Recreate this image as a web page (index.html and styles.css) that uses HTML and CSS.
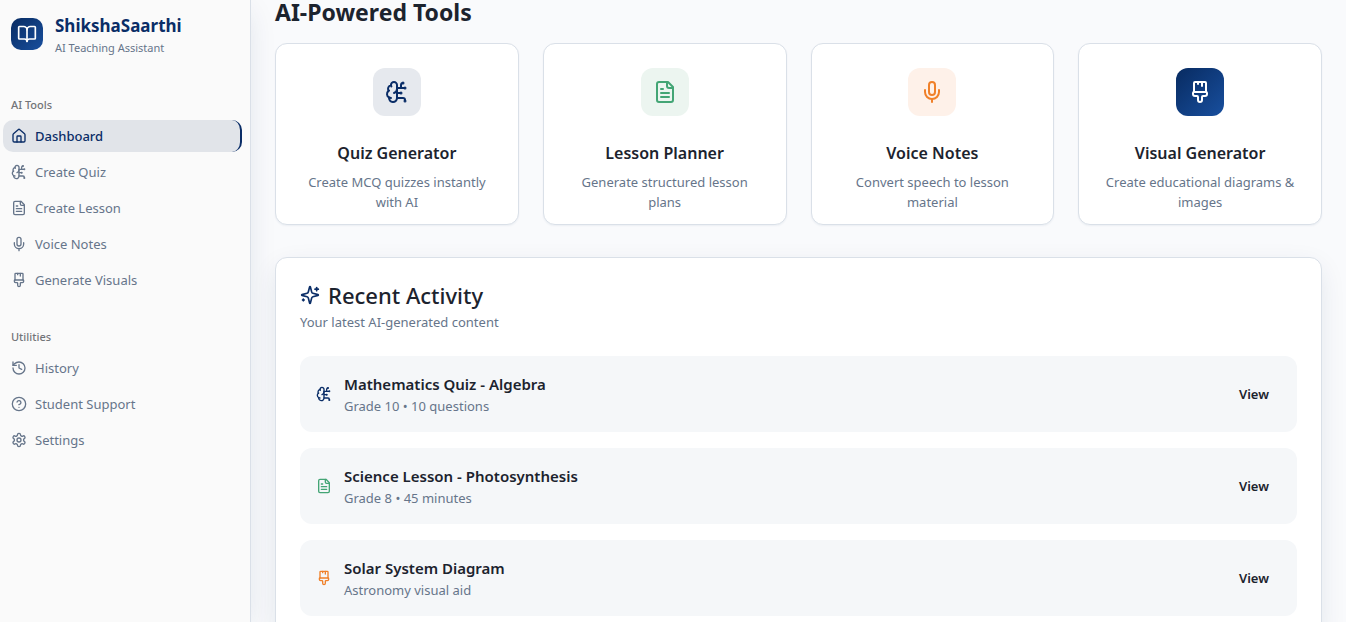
FILE: index.html
```html
<!DOCTYPE html>
<html lang="en">
<head>
<meta charset="utf-8">
<meta name="viewport" content="width=device-width, initial-scale=1">
<title>ShikshaSaarthi – AI Teaching Assistant</title>
<link rel="stylesheet" href="styles.css">
</head>
<body>
<svg class="sprite" aria-hidden="true">
  <symbol id="i-brain" viewBox="0 0 24 24"><path d="M12 5a3 3 0 1 0-5.997.125 4 4 0 0 0-2.526 5.77 4 4 0 0 0 .556 6.588A4 4 0 1 0 12 18Z"/><path d="M9 13a4.5 4.5 0 0 0 3-4"/><path d="M6.003 5.125A3 3 0 0 0 6.401 6.5"/><path d="M3.477 10.896a4 4 0 0 1 .585-.396"/><path d="M6 18a4 4 0 0 1-1.967-.516"/><path d="M12 13h4"/><path d="M12 18h6a2 2 0 0 1 2 2v1"/><path d="M12 8h8"/><path d="M16 8V5a2 2 0 0 1 2-2"/><circle cx="16" cy="13" r=".5"/><circle cx="18" cy="3" r=".5"/><circle cx="20" cy="21" r=".5"/><circle cx="20" cy="8" r=".5"/></symbol>
  <symbol id="i-house" viewBox="0 0 24 24"><path d="M15 21v-8a1 1 0 0 0-1-1h-4a1 1 0 0 0-1 1v8"/><path d="M3 10a2 2 0 0 1 .709-1.528l7-5.999a2 2 0 0 1 2.582 0l7 5.999A2 2 0 0 1 21 10v9a2 2 0 0 1-2 2H5a2 2 0 0 1-2-2z"/></symbol>
  <symbol id="i-file" viewBox="0 0 24 24"><path d="M15 2H6a2 2 0 0 0-2 2v16a2 2 0 0 0 2 2h12a2 2 0 0 0 2-2V7Z"/><path d="M14 2v4a2 2 0 0 0 2 2h4"/><path d="M10 9H8"/><path d="M16 13H8"/><path d="M16 17H8"/></symbol>
  <symbol id="i-mic" viewBox="0 0 24 24"><path d="M12 2a3 3 0 0 0-3 3v7a3 3 0 0 0 6 0V5a3 3 0 0 0-3-3Z"/><path d="M19 10v2a7 7 0 0 1-14 0v-2"/><path d="M12 19v3"/></symbol>
  <symbol id="i-brush" viewBox="0 0 24 24"><path d="M10 2v2"/><path d="M14 2v4"/><path d="M17 2a1 1 0 0 1 1 1v9H6V3a1 1 0 0 1 1-1z"/><path d="M6 12a1 1 0 0 0-1 1v1a2 2 0 0 0 2 2h2a1 1 0 0 1 1 1v2.9a2 2 0 1 0 4 0V17a1 1 0 0 1 1-1h2a2 2 0 0 0 2-2v-1a1 1 0 0 0-1-1"/></symbol>
  <symbol id="i-history" viewBox="0 0 24 24"><path d="M3 12a9 9 0 1 0 9-9 9.75 9.75 0 0 0-6.74 2.74L3 8"/><path d="M3 3v5h5"/><path d="M12 7v5l4 2"/></symbol>
  <symbol id="i-help" viewBox="0 0 24 24"><circle cx="12" cy="12" r="10"/><path d="M9.09 9a3 3 0 0 1 5.83 1c0 2-3 3-3 3"/><path d="M12 17h.01"/></symbol>
  <symbol id="i-gear" viewBox="0 0 24 24"><path d="M12.22 2h-.44a2 2 0 0 0-2 2v.18a2 2 0 0 1-1 1.73l-.43.25a2 2 0 0 1-2 0l-.15-.08a2 2 0 0 0-2.73.73l-.22.38a2 2 0 0 0 .73 2.73l.15.1a2 2 0 0 1 1 1.72v.51a2 2 0 0 1-1 1.74l-.15.09a2 2 0 0 0-.73 2.73l.22.38a2 2 0 0 0 2.73.73l.15-.08a2 2 0 0 1 2 0l.43.25a2 2 0 0 1 1 1.73V20a2 2 0 0 0 2 2h.44a2 2 0 0 0 2-2v-.18a2 2 0 0 1 1-1.73l.43-.25a2 2 0 0 1 2 0l.15.08a2 2 0 0 0 2.73-.73l.22-.39a2 2 0 0 0-.73-2.73l-.15-.08a2 2 0 0 1-1-1.74v-.5a2 2 0 0 1 1-1.74l.15-.09a2 2 0 0 0 .73-2.73l-.22-.38a2 2 0 0 0-2.73-.73l-.15.08a2 2 0 0 1-2 0l-.43-.25a2 2 0 0 1-1-1.73V4a2 2 0 0 0-2-2z"/><circle cx="12" cy="12" r="3"/></symbol>
  <symbol id="i-sparkles" viewBox="0 0 24 24"><path d="M9.937 15.5A2 2 0 0 0 8.5 14.063l-6.135-1.582a.5.5 0 0 1 0-.962L8.5 9.936A2 2 0 0 0 9.937 8.5l1.582-6.135a.5.5 0 0 1 .963 0L14.063 8.5A2 2 0 0 0 15.5 9.937l6.135 1.581a.5.5 0 0 1 0 .964L15.5 14.063a2 2 0 0 0-1.437 1.437l-1.582 6.135a.5.5 0 0 1-.963 0z"/><path d="M20 3v4"/><path d="M22 5h-4"/><path d="M4 17v2"/><path d="M5 18H3"/></symbol>
  <symbol id="i-book" viewBox="0 0 24 24"><path d="M12 7v14"/><path d="M3 18a1 1 0 0 1-1-1V4a1 1 0 0 1 1-1h5a4 4 0 0 1 4 4 4 4 0 0 1 4-4h5a1 1 0 0 1 1 1v13a1 1 0 0 1-1 1h-6a3 3 0 0 0-3 3 3 3 0 0 0-3-3z"/></symbol>
</svg>
<div class="app">
  <aside class="sidebar">
    <div class="brand">
      <span class="brand-logo"><svg class="icon icon-md"><use href="#i-book"/></svg></span>
      <div>
        <div class="brand-name">ShikshaSaarthi</div>
        <div class="brand-sub">AI Teaching Assistant</div>
      </div>
    </div>
    <nav class="group" aria-labelledby="g-tools">
      <div class="group-label" id="g-tools">AI Tools</div>
      <a class="nav-link active" href="#dashboard" aria-current="page"><svg class="icon"><use href="#i-house"/></svg>Dashboard</a>
      <a class="nav-link" href="#quiz"><svg class="icon"><use href="#i-brain"/></svg>Create Quiz</a>
      <a class="nav-link" href="#lesson"><svg class="icon"><use href="#i-file"/></svg>Create Lesson</a>
      <a class="nav-link" href="#voice"><svg class="icon"><use href="#i-mic"/></svg>Voice Notes</a>
      <a class="nav-link" href="#visuals"><svg class="icon"><use href="#i-brush"/></svg>Generate Visuals</a>
    </nav>
    <nav class="group" aria-labelledby="g-utilities">
      <div class="group-label" id="g-utilities">Utilities</div>
      <a class="nav-link" href="#history"><svg class="icon"><use href="#i-history"/></svg>History</a>
      <a class="nav-link" href="#support"><svg class="icon"><use href="#i-help"/></svg>Student Support</a>
      <a class="nav-link" href="#settings"><svg class="icon"><use href="#i-gear"/></svg>Settings</a>
    </nav>
  </aside>
  <main class="main">
    <h2 class="section-title">AI-Powered Tools</h2>
    <div class="tools">
      <a class="tool" href="#quiz">
        <span class="tile tile-navy"><svg class="icon icon-lg"><use href="#i-brain"/></svg></span>
        <h3 class="tool-title">Quiz Generator</h3>
        <p class="tool-text">Create MCQ quizzes instantly with AI</p>
      </a>
      <a class="tool" href="#lesson">
        <span class="tile tile-green"><svg class="icon icon-lg"><use href="#i-file"/></svg></span>
        <h3 class="tool-title">Lesson Planner</h3>
        <p class="tool-text">Generate structured lesson plans</p>
      </a>
      <a class="tool" href="#voice">
        <span class="tile tile-orange"><svg class="icon icon-lg"><use href="#i-mic"/></svg></span>
        <h3 class="tool-title">Voice Notes</h3>
        <p class="tool-text">Convert speech to lesson material</p>
      </a>
      <a class="tool" href="#visuals">
        <span class="tile tile-solid"><svg class="icon icon-lg"><use href="#i-brush"/></svg></span>
        <h3 class="tool-title">Visual Generator</h3>
        <p class="tool-text">Create educational diagrams &amp; images</p>
      </a>
    </div>
    <section class="recent">
      <h3 class="recent-title"><svg class="icon icon-md navy"><use href="#i-sparkles"/></svg>Recent Activity</h3>
      <p class="recent-sub">Your latest AI-generated content</p>
      <ul class="rows">
        <li class="row">
          <svg class="icon navy"><use href="#i-brain"/></svg>
          <div class="row-body"><div class="row-title">Mathematics Quiz - Algebra</div><div class="row-text">Grade 10 • 10 questions</div></div>
          <button class="view" type="button">View</button>
        </li>
        <li class="row">
          <svg class="icon green"><use href="#i-file"/></svg>
          <div class="row-body"><div class="row-title">Science Lesson - Photosynthesis</div><div class="row-text">Grade 8 • 45 minutes</div></div>
          <button class="view" type="button">View</button>
        </li>
        <li class="row">
          <svg class="icon orange"><use href="#i-brush"/></svg>
          <div class="row-body"><div class="row-title">Solar System Diagram</div><div class="row-text">Astronomy visual aid</div></div>
          <button class="view" type="button">View</button>
        </li>
      </ul>
    </section>
  </main>
</div>
</body>
</html>
```
FILE: styles.css
```css
:root {
  --navy: #0a2d67;
  --green: #43a575;
  --orange: #f08029;
  --ink: #1c232e;
  --muted: #66758a;
  --line: #dae0e8;
  --gradient: linear-gradient(135deg, #082b61, #184f9e);
  --shadow: 0 8px 28px -4px rgba(20, 50, 90, .12);
}
* { box-sizing: border-box; }
body, h2, h3, p, ul { margin: 0; padding: 0; }
body {
  font: 13px/20px "Noto Sans", "Open Sans", sans-serif;
  color: var(--ink);
  background: #f9fafc;
}
a { color: inherit; text-decoration: none; }
.sprite { display: none; }
.app { display: flex; height: 100vh; overflow: hidden; }

.icon {
  width: 16px;
  height: 16px;
  flex: none;
  fill: none;
  stroke: currentColor;
  stroke-width: 2;
  stroke-linecap: round;
  stroke-linejoin: round;
}
.icon-md { width: 20px; height: 20px; }
.icon-lg { width: 24px; height: 24px; }
.navy { color: var(--navy); }
.green { color: var(--green); }
.orange { color: var(--orange); }

.sidebar {
  flex: 0 0 251px;
  padding: 12px 8px 0 3px;
  background: #fafafa;
  border-right: 1px solid var(--line);
  box-shadow: var(--shadow);
}
.brand { display: flex; align-items: center; gap: 12px; padding: 0 8px; margin-bottom: 32px; }
.brand-logo {
  display: grid;
  place-items: center;
  width: 32px;
  height: 32px;
  border-radius: 10px;
  color: #fff;
  background: var(--gradient);
}
.brand-name { font-size: 17px; line-height: 28px; font-weight: 700; color: var(--navy); }
.brand-sub { font-size: 11px; line-height: 16px; color: var(--muted); }
.group { display: flex; flex-direction: column; gap: 4px; margin-bottom: 24px; }
.group-label { padding: 9px 8px 3px; font-size: 11px; line-height: 16px; font-weight: 500; color: #727478; }
.nav-link {
  display: flex;
  align-items: center;
  gap: 8px;
  height: 32px;
  padding: 0 8px;
  border-radius: 10px;
  color: var(--muted);
}
.nav-link.active {
  font-weight: 500;
  color: var(--navy);
  background: #e1e4e9;
  border-right: 2px solid var(--navy);
}

.main { flex: 1; min-width: 0; padding: 0 24px; }
.section-title { font-size: 23px; line-height: 24px; font-weight: 700; margin-bottom: 19px; }
.tools { display: grid; grid-template-columns: repeat(4, 1fr); gap: 24px; margin-bottom: 32px; }
.tool {
  display: flex;
  flex-direction: column;
  align-items: center;
  padding: 24px 24px 12px;
  text-align: center;
  background: #fff;
  border: 1px solid var(--line);
  border-radius: 12px;
  box-shadow: 0 1px 2px rgba(10, 45, 103, .06);
}
.tile { display: grid; place-items: center; width: 48px; height: 48px; border-radius: 12px; margin-bottom: 25px; }
.tile-navy { color: var(--navy); background: #e6e9ee; }
.tile-green { color: var(--green); background: #ecf5f0; }
.tile-orange { color: var(--orange); background: #fef1e9; }
.tile-solid { color: #fff; background: var(--gradient); }
.tool-title { font-size: 16px; line-height: 24px; font-weight: 600; margin-bottom: 7px; }
.tool-text { color: var(--muted); }

.recent {
  padding: 24px;
  background: #fff;
  border: 1px solid var(--line);
  border-radius: 12px;
  box-shadow: var(--shadow);
}
.recent-title { display: flex; align-items: center; gap: 8px; font-size: 22px; line-height: 26px; font-weight: 500; margin-bottom: 4px; }
.recent-sub { color: var(--muted); margin-bottom: 24px; }
.rows { display: grid; gap: 16px; list-style: none; }
.row { display: flex; align-items: center; gap: 12px; padding: 16px; border-radius: 12px; background: #f5f7f9; }
.row-body { flex: 1; }
.row-title { font-size: 15px; line-height: 24px; font-weight: 600; }
.row-text { color: var(--muted); }
.view {
  padding: 8px 12px;
  border: 0;
  border-radius: 10px;
  background: none;
  color: inherit;
  font: 600 13px/20px "Noto Sans", "Open Sans", sans-serif;
}
```
